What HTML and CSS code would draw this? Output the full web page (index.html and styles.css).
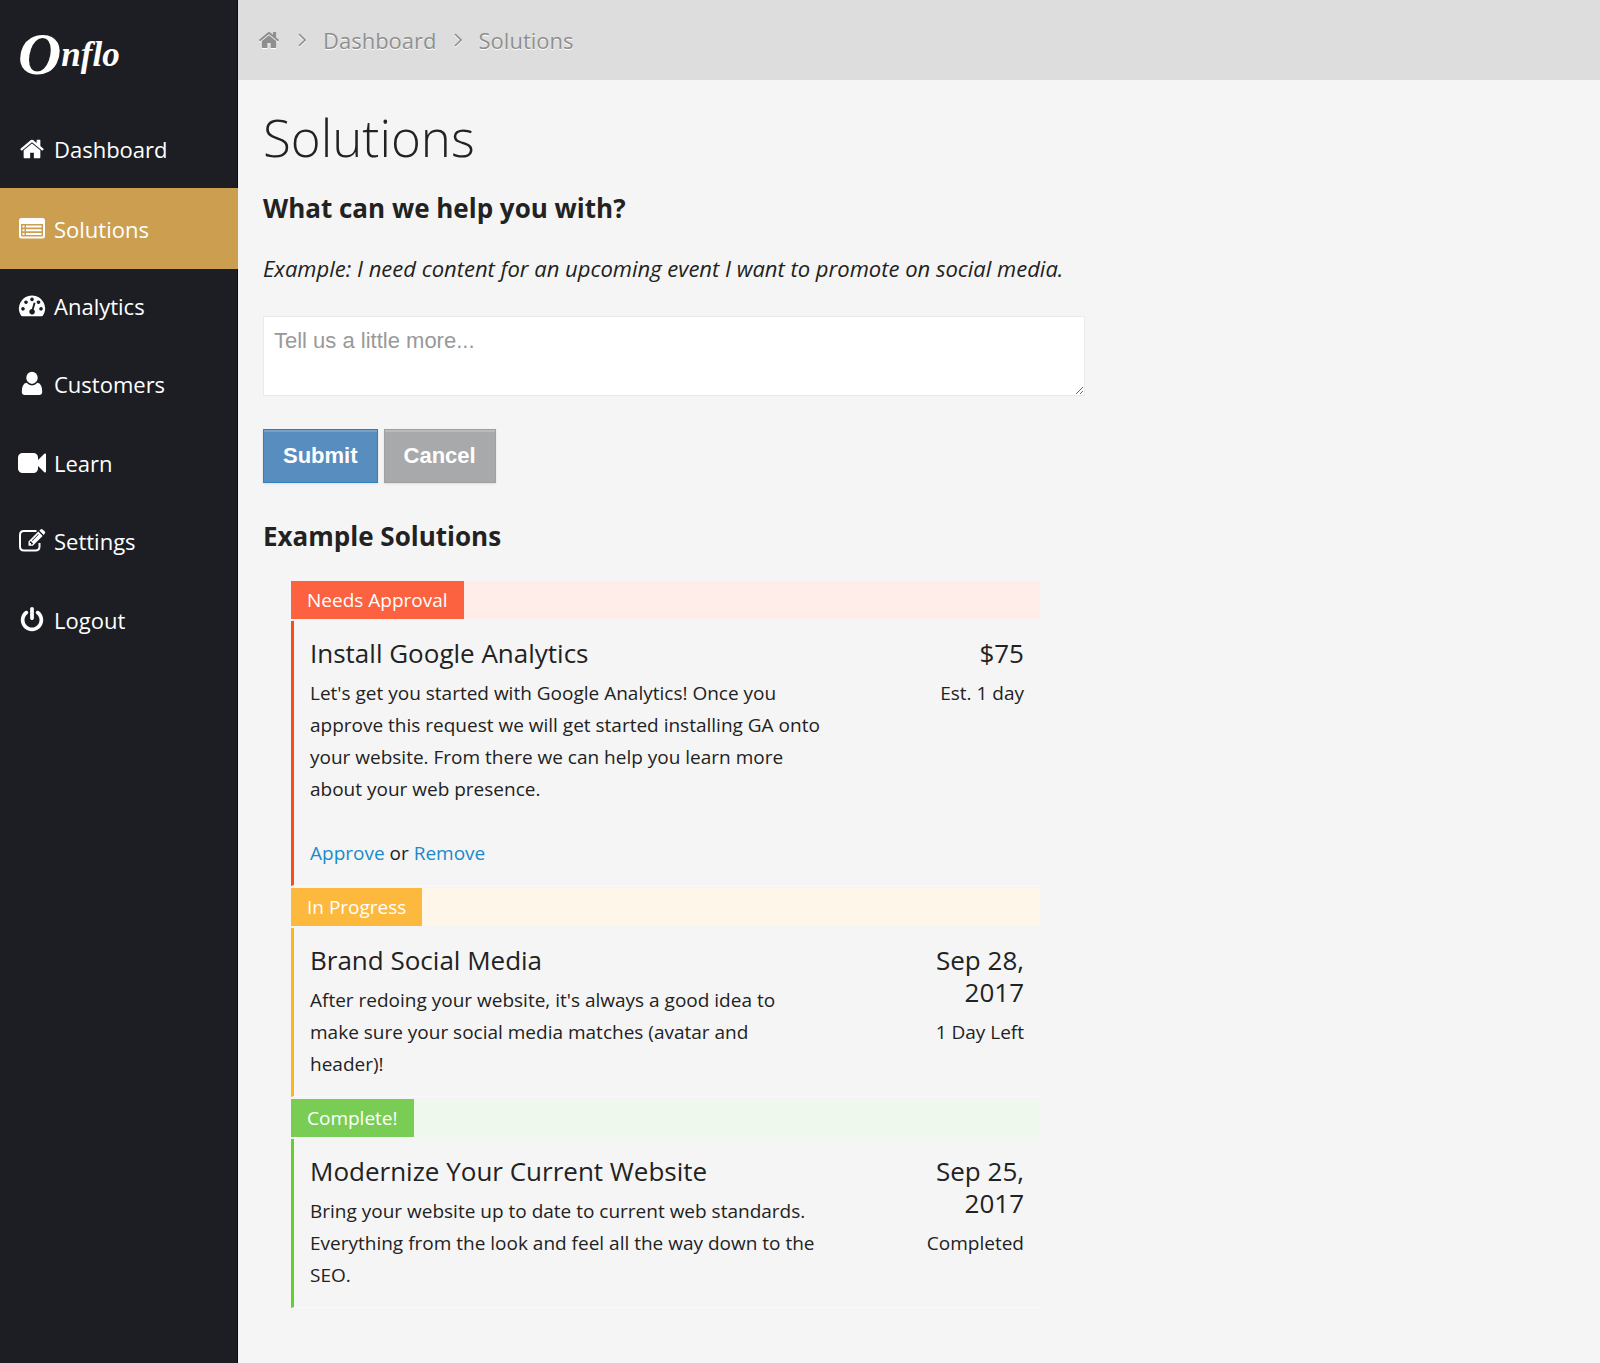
FILE: index.html
```html
<!DOCTYPE html>
<html lang="en">
<head>
<meta charset="utf-8">
<title>Solutions</title>
<meta name="viewport" content="width=device-width, initial-scale=1">
<link rel="stylesheet" href="styles.css">
</head>
<body>
<svg class="defs" aria-hidden="true">
  <symbol id="home" viewBox="-70 -70 1932 1932"><path d="M1472 992v480q0 26-19 45t-45 19h-384v-384h-256v384h-384q-26 0-45-19t-19-45v-480q0-1 .5-3t.5-3l575-474 575 474q1 2 1 6zm223-69l-62 74q-8 9-21 11h-3q-13 0-21-7l-692-577-692 577q-12 8-24 7-13-2-21-11l-62-74q-8-10-7-23.5t11-21.5l719-599q32-26 76-26t76 26l244 204v-195q0-14 9-23t23-9h192q14 0 23 9t9 23v408l219 182q10 8 11 21.5t-7 23.5z"/></symbol>
  <symbol id="chevron" viewBox="0 0 8 14"><path d="M1 1l6 6-6 6" fill="none" stroke="currentColor" stroke-width="1.6"/></symbol>
</svg>
<div class="app">
  <aside class="sidebar">
    <a class="logo" href="#"><span class="logo-cap">O</span>nflo</a>
    <nav class="menu">
      <a href="#"><svg class="icon"><use href="#home"/></svg>Dashboard</a>
      <a href="#" class="active" aria-current="page"><svg class="icon" viewBox="0 0 28 28"><path fill-rule="evenodd" d="M3.500 3h21q2.500 0 2.500 2.500v15.500q0 2.500-2.500 2.500h-21q-2.500 0-2.500-2.500v-15.500q0-2.500 2.500-2.500zM3 9v11.500q0 1 1 1h20q1 0 1-1v-11.500zM4.500 10.500h2v2h-2zM8 10.500h15.500v2h-15.500zM4.500 14.300h2v2h-2zM8 14.300h15.500v2h-15.500zM4.500 18h2v2h-2zM8 18h15.500v2h-15.500z"/></svg>Solutions</a>
      <a href="#"><svg class="icon" viewBox="0 0 28 28"><path fill-rule="evenodd" d="M14 3.500a13 13 0 0 1 11 20q-.5.800-1.500.800h-19q-1 0-1.500-.8a13 13 0 0 1 11-20zM5 15a1.800 1.800 0 1 0 .01 0zM8 8.400a1.800 1.800 0 1 0 .01 0zM14 5.600a1.800 1.800 0 1 0 .01 0zM20.500 8.400a1.800 1.800 0 1 0 .01 0zM23 15a1.800 1.800 0 1 0 .01 0zM15.700 10.600l-1.800 6.300a2.800 2.800 0 1 0 1.800.5l1.800-6.300z"/></svg>Analytics</a>
      <a href="#"><svg class="icon" viewBox="0 0 28 28"><ellipse cx="14" cy="7.800" rx="5.700" ry="6.100"/><path d="M8.600 12.800q2.300 2.600 5.400 2.600t5.400-2.600q4.800.8 4.800 9 0 3.200-3.200 3.200h-14q-3.200 0-3.200-3.200 0-8.200 4.800-9z"/></svg>Customers</a>
      <a href="#"><svg class="icon" viewBox="0 0 1792 1792"><path d="M1792 352v1088q0 42-39 59-13 5-25 5-27 0-45-19l-403-403v166q0 119-84.500 203.500t-203.500 84.500h-704q-119 0-203.500-84.500t-84.500-203.500v-704q0-119 84.500-203.500t203.500-84.500h704q119 0 203.500 84.500t84.500 203.500v165l403-402q18-19 45-19 12 0 25 5 39 17 39 59z"/></svg>Learn</a>
      <a href="#"><svg class="icon" viewBox="0 0 28 28"><path d="M18.500 4h-12.500q-4 0-4 4v11.500q0 4 4 4h11.500q4 0 4-4v-3.500" fill="none" stroke="currentColor" stroke-width="2"/><path fill-rule="evenodd" d="M20.300 4.600l4.300 4.300-9.800 9.800h-4.300v-4.300zM12.700 14l-.9.900v1.200h1.200v1.300h1.200l.9-.9zM13.900 13.400l6.300-6.300.5.500-6.300 6.300zM21.300 3.600l1.300-1.200q1-.9 2 0l2.200 2.200q1 1 0 2l-1.200 1.300z"/></svg>Settings</a>
      <a href="#"><svg class="icon" viewBox="-60 0 1912 1792"><path d="M1664 896q0 156-61 298t-164 245-245 164-298 61-298-61-245-164-164-245-61-298q0-182 80.500-343t226.500-270q43-32 95.500-25t83.500 50q32 42 24.500 94.500t-49.500 84.500q-98 74-151.500 181t-53.500 228q0 104 40.500 198.500t109.500 163.500 163.500 109.500 198.500 40.500 198.500-40.500 163.500-109.500 109.500-163.500 40.500-198.500q0-121-53.500-228t-151.500-181q-42-32-49.500-84.500t24.500-94.500q31-43 84-50t95 25q146 109 226.500 270t80.500 343zm-640-768v640q0 52-38 90t-90 38-90-38-38-90v-640q0-52 38-90t90-38 90 38 38 90z"/></svg>Logout</a>
    </nav>
  </aside>
  <div class="page">
    <nav class="crumbs" aria-label="Breadcrumb">
      <a href="#" aria-label="Home"><svg class="crumb-home"><use href="#home"/></svg></a>
      <svg class="chevron"><use href="#chevron"/></svg>
      <a href="#">Dashboard</a>
      <svg class="chevron"><use href="#chevron"/></svg>
      <a href="#">Solutions</a>
    </nav>
    <main class="content">
      <h1>Solutions</h1>
      <form class="request">
        <h2><label for="details">What can we help you with?</label></h2>
        <p class="hint">Example: I need content for an upcoming event I want to promote on social media.</p>
        <textarea id="details" placeholder="Tell us a little more..."></textarea>
        <div class="actions">
          <button type="submit" class="btn btn-primary">Submit</button>
          <button type="reset" class="btn">Cancel</button>
        </div>
      </form>
      <h2>Example Solutions</h2>
      <ul class="solutions">
        <li class="solution pending">
          <div class="bar"><span class="status">Needs Approval</span></div>
          <div class="body">
            <div class="summary">
              <h3>Install Google Analytics</h3>
              <p>Let's get you started with Google Analytics! Once you approve this request we will get started installing GA onto your website. From there we can help you learn more about your web presence.</p>
              <p class="links"><a href="#">Approve</a> or <a href="#">Remove</a></p>
            </div>
            <div class="due">
              <h3>$75</h3>
              <p>Est. 1 day</p>
            </div>
          </div>
        </li>
        <li class="solution progress">
          <div class="bar"><span class="status">In Progress</span></div>
          <div class="body">
            <div class="summary">
              <h3>Brand Social Media</h3>
              <p>After redoing your website, it's always a good idea to make sure your social media matches (avatar and header)!</p>
            </div>
            <div class="due">
              <h3>Sep 28, 2017</h3>
              <p>1 Day Left</p>
            </div>
          </div>
        </li>
        <li class="solution complete">
          <div class="bar"><span class="status">Complete!</span></div>
          <div class="body">
            <div class="summary">
              <h3>Modernize Your Current Website</h3>
              <p>Bring your website up to date to current web standards. Everything from the look and feel all the way down to the SEO.</p>
            </div>
            <div class="due">
              <h3>Sep 25, 2017</h3>
              <p>Completed</p>
            </div>
          </div>
        </li>
      </ul>
    </main>
  </div>
</div>
</body>
</html>
```
FILE: styles.css
```css
* { box-sizing: border-box; }

body {
  margin: 0;
  background: #f5f5f5;
  color: #222;
  font: 19px/32px "Open Sans", sans-serif;
}

h1, h2, h3, p, ul { margin: 0; padding: 0; }
a { color: #1a8acb; text-decoration: none; }
svg { fill: currentColor; flex: none; }
.defs { display: none; }

.app { display: flex; min-height: 100vh; }

/* Sidebar */
.sidebar {
  flex: none;
  width: 238px;
  background: #1d1e23;
  border-right: 1px solid #0c0c0e;
}
.logo {
  display: block;
  height: 110px;
  padding: 24px 18px;
  color: #fff;
  font: italic bold 35px/60px "Liberation Serif", serif;
}
.logo-cap { font-size: 60px; vertical-align: -8px; }

.menu {
  display: grid;
  grid-auto-rows: 1fr;
  height: 549px;
}
.menu a {
  display: flex;
  align-items: center;
  gap: 8px;
  padding: 0 18px;
  color: #fff;
  font-size: 22px;
}
.menu .active {
  width: 238px;
  margin: 0 0 -2px;
  background: #cc9f50;
}
.icon { width: 28px; height: 28px; }

/* Breadcrumb */
.page { flex: 1; min-width: 0; }
.crumbs {
  display: flex;
  align-items: center;
  height: 80px;
  padding: 0 19px;
  gap: 17px;
  background: #ddd;
  color: #8f8f8f;
  font-size: 22px;
  text-shadow: 0 1px 0 #fff;
}
.crumbs a { color: inherit; display: flex; }
.crumbs svg { filter: drop-shadow(0 1px 0 #fff); }
.crumb-home { width: 24px; height: 24px; }
.chevron { width: 8px; height: 14px; }

/* Content */
.content { padding: 24px 25px; }
h1 { font-size: 51px; font-weight: 300; line-height: 66px; }
h2 { font-size: 26px; font-weight: 700; line-height: 40px; }
.request { max-width: 822px; margin: 18px 0 33px; }
.hint {
  margin: 24px 0 32px;
  font-size: 22px;
  font-style: italic;
}
textarea {
  display: block;
  width: 100%;
  height: 80px;
  padding: 8px 10px;
  border: 1px solid #eaeaea;
  background: #fff;
  color: #333;
  font: 22px/32px "Liberation Sans", sans-serif;
  resize: vertical;
}
textarea::placeholder { color: #999; }
.actions { display: flex; gap: 6px; margin-top: 33px; }
.btn {
  height: 54px;
  padding: 0 19px;
  border: 1px solid #9fa0a2;
  background: #a7a9ab;
  color: #fff;
  font: bold 22px "Liberation Sans", sans-serif;
  box-shadow: inset 0 2px 0 #b8babb, 0 1px 2px #ddd;
}
.btn-primary {
  border-color: #2f80bd;
  background: #588ebf;
  box-shadow: inset 0 2px 0 #76a2ca, 0 1px 2px #ddd;
}

/* Solution list */
.solutions { max-width: 777px; margin-top: 25px; padding-left: 28px; list-style: none; }
.solution { padding-bottom: 2px; }
.bar { display: flex; margin-bottom: 2px; background: var(--tint); }
.status { padding: 3px 16px; background: var(--tone); color: #fff; }
.body {
  display: flex;
  justify-content: space-between;
  padding: 16px;
  border-left: 3px solid var(--edge);
  border-bottom: 1px solid #f9f9f9;
}
.summary { width: 514px; }
.due { width: 110px; text-align: right; }
h3 { margin-bottom: 8px; font-size: 26px; font-weight: 400; line-height: 32px; }
.links { margin-top: 32px; }
.pending { --tone: #fc623f; --tint: #ffedea; --edge: #ff4a17; }
.progress { --tone: #fcb93d; --tint: #fff6ea; --edge: #ffb41a; }
.complete { --tone: #7acd54; --tint: #eff8ec; --edge: #62d22b; }
```
